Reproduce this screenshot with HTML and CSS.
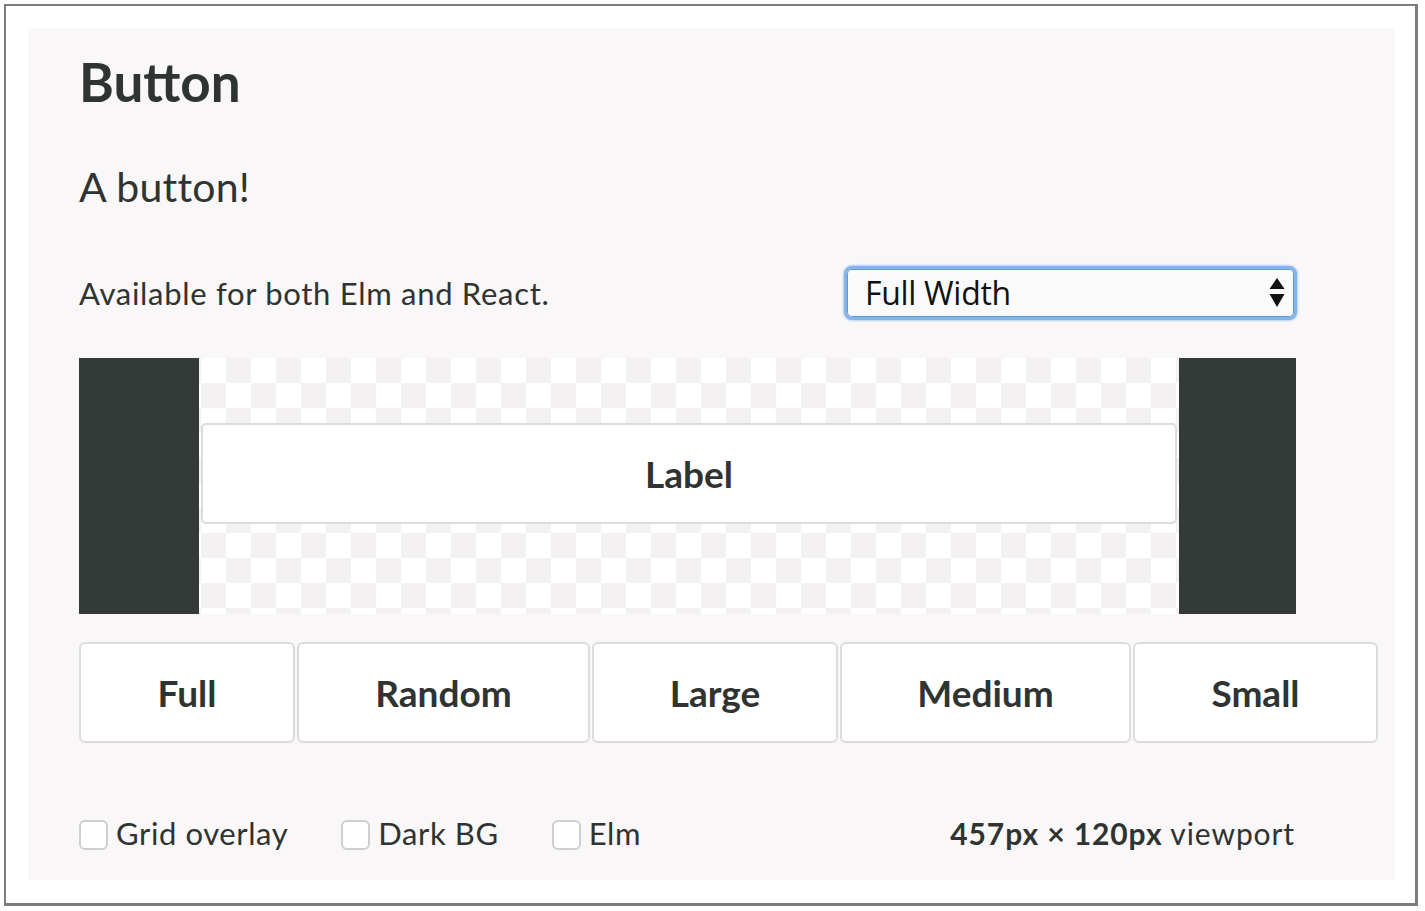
FILE: index.html
```html
<!DOCTYPE html>
<html lang="en">
<head>
<meta charset="utf-8">
<title>Button</title>
<link rel="stylesheet" href="styles.css">
</head>
<body>
<div class="frame">
  <main class="panel">
    <h1 class="title">Button</h1>
    <p class="subtitle">A button!</p>
    <div class="intro-row">
      <p class="intro">Available for both Elm and React.</p>
      <div class="select">
        <span class="select-value">Full Width</span>
        <svg class="select-arrows" width="16" height="30" viewBox="0 0 16 30" aria-hidden="true">
          <path d="M8 0 L15.5 11 L0.5 11 Z" fill="#111"/>
          <path d="M0.5 16 L15.5 16 L8 29 Z" fill="#111"/>
        </svg>
      </div>
    </div>
    <div class="stage">
      <div class="stage-side"></div>
      <div class="stage-viewport">
        <button class="btn btn-label">Label</button>
      </div>
      <div class="stage-side stage-side-right"></div>
    </div>
    <div class="size-buttons">
      <button class="btn btn-size">Full</button>
      <button class="btn btn-size">Random</button>
      <button class="btn btn-size">Large</button>
      <button class="btn btn-size">Medium</button>
      <button class="btn btn-size">Small</button>
    </div>
    <div class="options">
      <div class="checks">
        <label class="check"><input type="checkbox" class="check-box"><span>Grid overlay</span></label>
        <label class="check"><input type="checkbox" class="check-box"><span>Dark BG</span></label>
        <label class="check"><input type="checkbox" class="check-box"><span>Elm</span></label>
      </div>
      <p class="viewport-size"><strong>457px × 120px</strong> viewport</p>
    </div>
  </main>
</div>
</body>
</html>
```

FILE: styles.css
```css
* {
  box-sizing: border-box;
}

html, body {
  margin: 0;
  padding: 0;
  background: #ffffff;
}

body {
  font-family: Lato, "Noto Sans", "Liberation Sans", sans-serif;
  color: #2f3331;
}

.frame {
  margin: 4px 0 0 4px;
  width: 1414px;
  height: 902px;
  border-style: solid;
  border-color: #7c7c7c;
  border-width: 2px 3px 3px 2px;
  padding: 22px 20px 22px 22px;
  background: #ffffff;
}

.panel {
  height: 852px;
  background: #f9f7f7;
  padding: 26px 0 0 51px;
  overflow: hidden;
}

.title {
  margin: 0;
  font-size: 53px;
  line-height: 55px;
  font-weight: 700;
  color: #2f3431;
}

.subtitle {
  margin: 57px 0 0;
  font-size: 41px;
  line-height: 42px;
  font-weight: 400;
  color: #2f3331;
  letter-spacing: 0.2px;
}

.intro-row {
  margin-top: 57px;
  width: 1219px;
  height: 56px;
  display: flex;
  align-items: center;
  justify-content: space-between;
}

.intro {
  margin: 0;
  font-size: 31px;
  line-height: 36px;
  letter-spacing: 0.7px;
  color: #2f3331;
}

.select {
  width: 453px;
  height: 54px;
  margin-right: 1px;
  border: 3px solid #86b4e6;
  border-radius: 8px;
  box-shadow: inset 0 0 0 1px #5f9ad8, 0 0 2px 1px #b3d0f0;
  background: #fafafa;
  display: flex;
  align-items: center;
  justify-content: space-between;
  padding: 0 9px 0 18px;
}

.select-value {
  font-size: 32px;
  line-height: 36px;
  color: #111;
  font-family: "Open Sans", Lato, sans-serif;
  letter-spacing: -0.3px;
}

.select-arrows {
  display: block;
}

.stage {
  margin-top: 37px;
  width: 1217px;
  height: 256px;
  display: flex;
}

.stage-side {
  width: 120px;
  flex: none;
  background: #343a38;
}

.stage-side-right {
  width: 117px;
}

.stage-viewport {
  flex: 1;
  padding: 65px 2px 0;
  background-color: #ffffff;
  background-image: conic-gradient(#f3f1f1 0 25%, #ffffff 0 50%, #f3f1f1 0 75%, #ffffff 0);
  background-size: 50px 50px;
  background-position: 2px 0;
}

.btn {
  font-family: Lato, "Noto Sans", sans-serif;
  font-weight: 700;
  color: #2f3331;
  background: #ffffff;
  border: 2px solid #dcdcdc;
  border-radius: 6px;
  padding: 0;
  margin: 0;
  display: flex;
  align-items: center;
  justify-content: center;
}

.btn-label {
  width: 100%;
  height: 101px;
  font-size: 37px;
  border-radius: 5px;
}

.size-buttons {
  margin-top: 28px;
  display: grid;
  grid-template-columns: 216px 293px 246px 291px 245px;
  column-gap: 2px;
  width: 1301px;
}

.btn-size {
  height: 101px;
  font-size: 37px;
}

.options {
  margin-top: 77px;
  width: 1216px;
  height: 30px;
  display: flex;
  align-items: center;
  justify-content: space-between;
}

.checks {
  display: flex;
  align-items: center;
  gap: 53px;
}

.check {
  display: flex;
  align-items: center;
  gap: 8px;
  font-size: 31px;
  line-height: 30px;
  letter-spacing: 0.6px;
  color: #2f3331;
  padding-bottom: 5px;
}

.check-box {
  appearance: none;
  -webkit-appearance: none;
  margin: 5px 0 0;
  width: 29px;
  height: 30px;
  border: 2px solid #cfcfcf;
  border-radius: 6px;
  background: #ffffff;
  flex: none;
}

.viewport-size {
  margin: 0;
  font-size: 30px;
  line-height: 30px;
  letter-spacing: 0.9px;
  color: #2f3331;
  padding-bottom: 5px;
}

.viewport-size strong {
  font-weight: 700;
}
```
